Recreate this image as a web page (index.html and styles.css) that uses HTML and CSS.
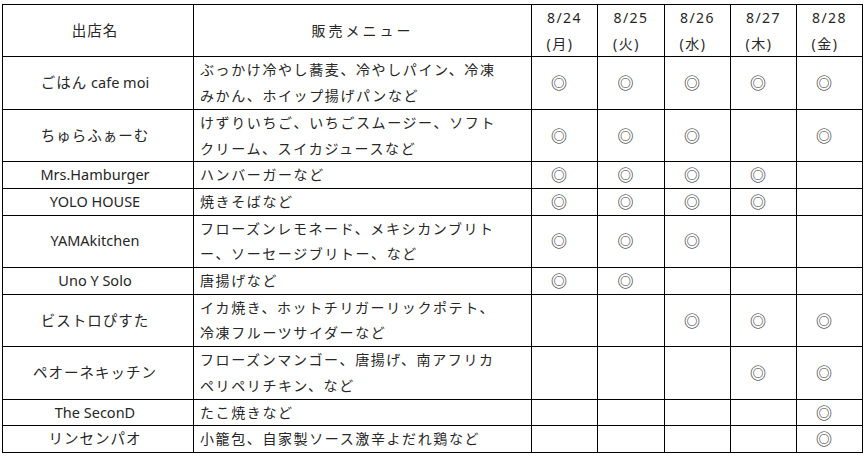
FILE: index.html
```html
<!DOCTYPE html>
<html lang="ja">
<head>
<meta charset="utf-8">
<link rel="stylesheet" href="styles.css">
</head>
<body>
<table class="sched">
<colgroup>
<col class="c-name"><col class="c-menu"><col class="c-d"><col class="c-d2"><col class="c-d"><col class="c-d"><col class="c-d">
</colgroup>
<thead>
<tr>
<th class="name jp">出店名</th>
<th class="menu-h">販売メニュー</th>
<th class="date">8/24<br><span class="dow">(月)</span></th>
<th class="date">8/25<br><span class="dow">(火)</span></th>
<th class="date">8/26<br><span class="dow">(水)</span></th>
<th class="date">8/27<br><span class="dow">(木)</span></th>
<th class="date">8/28<br><span class="dow">(金)</span></th>
</tr>
</thead>
<tbody>
<tr>
<td class="name"><span class="jp">ごはん</span> cafe moi</td>
<td class="menu">ぶっかけ冷やし蕎麦、冷やしパイン、冷凍<br>みかん、ホイップ揚げパンなど</td>
<td class="mark"><span>◎</span></td><td class="mark"><span>◎</span></td><td class="mark"><span>◎</span></td><td class="mark"><span>◎</span></td><td class="mark"><span>◎</span></td>
</tr>
<tr>
<td class="name jp">ちゅらふぁーむ</td>
<td class="menu">けずりいちご、いちごスムージー、ソフト<br>クリーム、スイカジュースなど</td>
<td class="mark"><span>◎</span></td><td class="mark"><span>◎</span></td><td class="mark"><span>◎</span></td><td class="mark"></td><td class="mark"><span>◎</span></td>
</tr>
<tr>
<td class="name">Mrs.Hamburger</td>
<td class="menu">ハンバーガーなど</td>
<td class="mark"><span>◎</span></td><td class="mark"><span>◎</span></td><td class="mark"><span>◎</span></td><td class="mark"><span>◎</span></td><td class="mark"></td>
</tr>
<tr>
<td class="name">YOLO HOUSE</td>
<td class="menu">焼きそばなど</td>
<td class="mark"><span>◎</span></td><td class="mark"><span>◎</span></td><td class="mark"><span>◎</span></td><td class="mark"><span>◎</span></td><td class="mark"></td>
</tr>
<tr>
<td class="name">YAMAkitchen</td>
<td class="menu">フローズンレモネード、メキシカンブリト<br>ー、ソーセージブリトー、など</td>
<td class="mark"><span>◎</span></td><td class="mark"><span>◎</span></td><td class="mark"><span>◎</span></td><td class="mark"></td><td class="mark"></td>
</tr>
<tr>
<td class="name">Uno Y Solo</td>
<td class="menu">唐揚げなど</td>
<td class="mark"><span>◎</span></td><td class="mark"><span>◎</span></td><td class="mark"></td><td class="mark"></td><td class="mark"></td>
</tr>
<tr>
<td class="name jp">ビストロぴすた</td>
<td class="menu">イカ焼き、ホットチリガーリックポテト、<br>冷凍フルーツサイダーなど</td>
<td class="mark"></td><td class="mark"></td><td class="mark"><span>◎</span></td><td class="mark"><span>◎</span></td><td class="mark"><span>◎</span></td>
</tr>
<tr>
<td class="name jp">ペオーネキッチン</td>
<td class="menu">フローズンマンゴー、唐揚げ、南アフリカ<br>ペリペリチキン、など</td>
<td class="mark"></td><td class="mark"></td><td class="mark"></td><td class="mark"><span>◎</span></td><td class="mark"><span>◎</span></td>
</tr>
<tr>
<td class="name">The SeconD</td>
<td class="menu">たこ焼きなど</td>
<td class="mark"></td><td class="mark"></td><td class="mark"></td><td class="mark"></td><td class="mark"><span>◎</span></td>
</tr>
<tr>
<td class="name jp">リンセンパオ</td>
<td class="menu">小籠包、自家製ソース激辛よだれ鶏など</td>
<td class="mark"></td><td class="mark"></td><td class="mark"></td><td class="mark"></td><td class="mark"><span>◎</span></td>
</tr>
</tbody>
</table>
</body>
</html>
```
FILE: styles.css
```css
html, body {
  margin: 0;
  background: #fff;
}
body {
  padding: 4px 0 0 2px;
  font-family: "Noto Sans", "Noto Sans CJK JP", sans-serif;
  font-size: 14px;
  color: #262626;
}
.sched {
  border-collapse: collapse;
  table-layout: fixed;
  width: 861px;
}
.c-name { width: 191px; }
.c-menu { width: 338px; }
.c-d { width: 66px; }
.c-d2 { width: 67px; }
.sched th,
.sched td {
  border: 1px solid #000;
  padding: 0;
  line-height: 25.7px;
  font-weight: normal;
  white-space: nowrap;
  vertical-align: middle;
}
.name {
  text-align: center;
  padding-right: 6px !important;
  font-size: 14.5px;
}
.jp {
  letter-spacing: 1px;
}
.menu-h {
  text-align: center;
  letter-spacing: 3px;
}
.menu {
  text-align: left;
  padding-left: 6px !important;
  letter-spacing: 1.6px;
}
.date {
  text-align: center;
  letter-spacing: 1.4px;
}
.dow {
  display: inline-block;
  margin-right: 9px;
  letter-spacing: 1.5px;
}
.mark {
  text-align: center;
}
.mark span {
  display: inline-block;
  vertical-align: top;
  line-height: 25.7px;
  margin-right: 11px;
  font-family: "Noto Sans CJK JP", sans-serif;
  font-size: 16px;
  color: #1a1a1a;
}
```
